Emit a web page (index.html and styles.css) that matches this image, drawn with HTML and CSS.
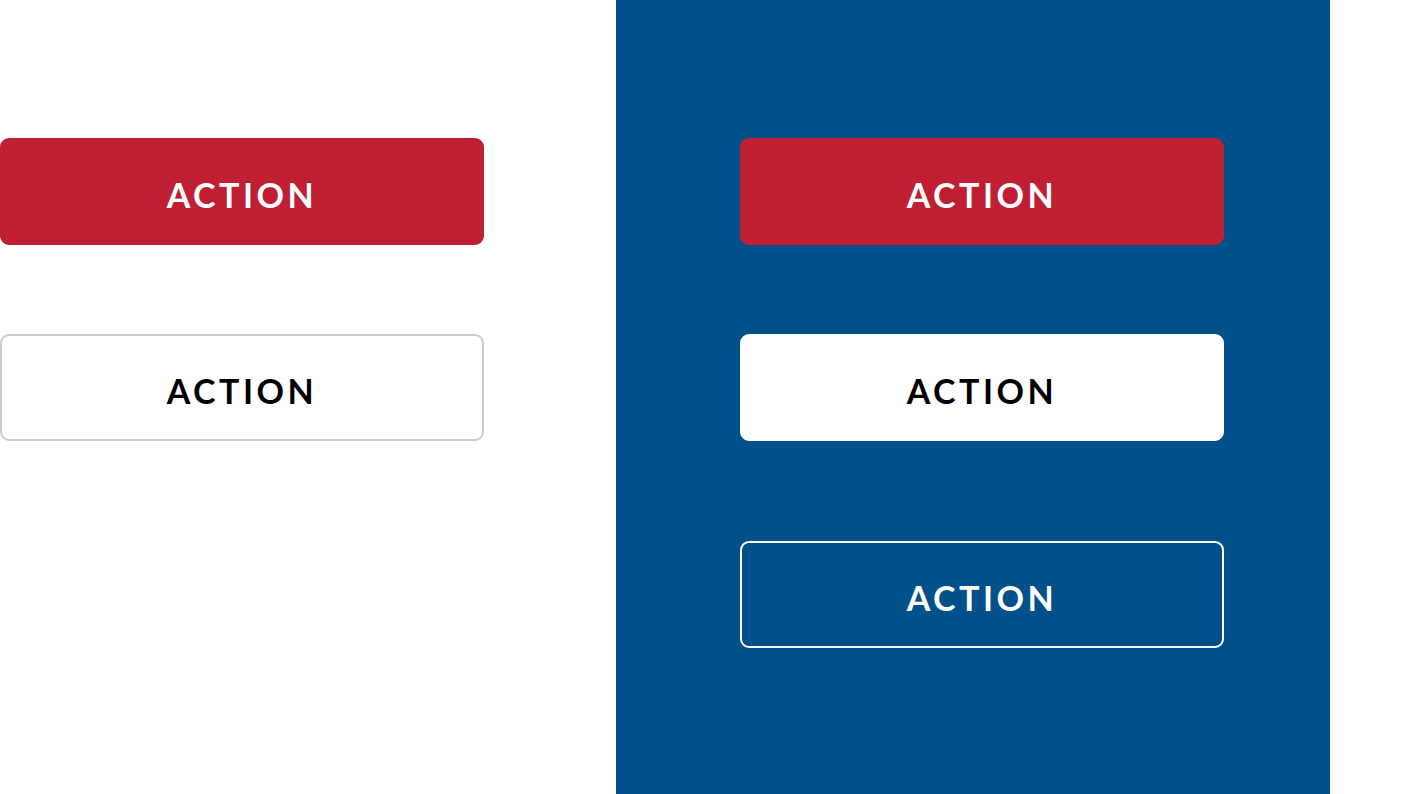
FILE: index.html
```html
<!DOCTYPE html>
<html>
<head>
<meta charset="utf-8">
<link rel="stylesheet" href="styles.css">
</head>
<body>
<div class="page">
  <div class="col col-light">
    <button class="btn btn-red">ACTION</button>
    <button class="btn btn-outline-grey">ACTION</button>
  </div>
  <div class="panel">
    <div class="col col-dark">
      <button class="btn btn-red">ACTION</button>
      <button class="btn btn-white">ACTION</button>
      <button class="btn btn-outline-white">ACTION</button>
    </div>
  </div>
</div>
</body>
</html>
```
FILE: styles.css
```css
html, body {
  margin: 0;
  padding: 0;
  background: #ffffff;
}
.page {
  display: flex;
  width: 1426px;
  height: 794px;
}
.col {
  display: flex;
  flex-direction: column;
  width: 484px;
  padding-top: 138px;
}
.col-light {
  gap: 89px;
}
.col-dark {
  gap: 89px;
}
.panel {
  margin-left: 132px;
  width: 590px;
  padding-left: 124px;
  height: 794px;
  background: #02508a;
}
.btn {
  box-sizing: border-box;
  width: 484px;
  height: 107px;
  border-radius: 9px;
  border: 2px solid transparent;
  font-family: Lato, "Open Sans", sans-serif;
  font-weight: 700;
  font-size: 34px;
  letter-spacing: 3.5px;
  padding: 6px 0 0 0;
  margin: 0;
  cursor: pointer;
}
.btn-red {
  background: #c01f33;
  border-color: #c01f33;
  color: #ffffff;
}
.btn-outline-grey {
  background: #ffffff;
  border-color: #cccccc;
  color: #000000;
}
.btn-white {
  background: #ffffff;
  border-color: #ffffff;
  color: #000000;
}
.btn-outline-white {
  background: transparent;
  border-color: #ffffff;
  color: #ffffff;
  margin-top: 11px;
}
```
